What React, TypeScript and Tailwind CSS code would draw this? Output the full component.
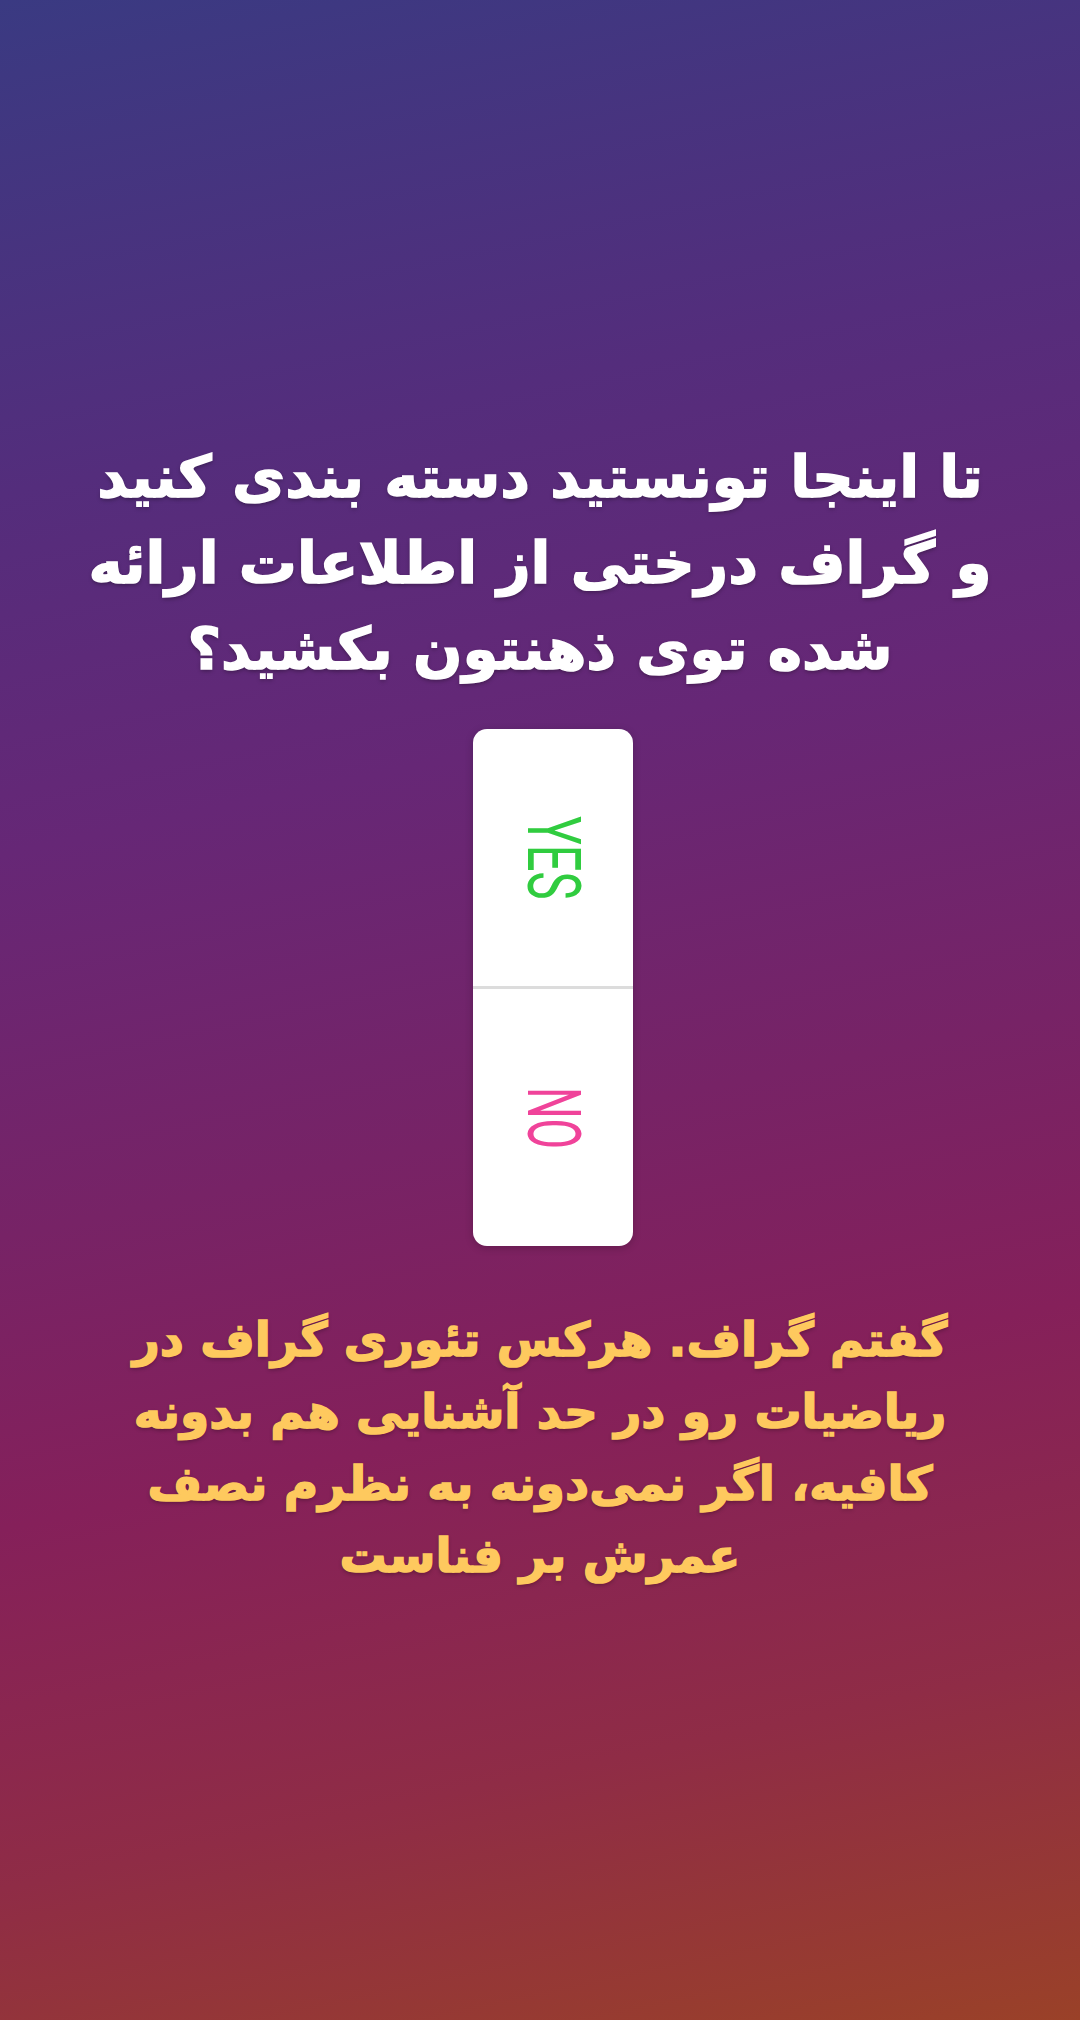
import React from "react";

const titleLines = [
  "تا اینجا تونستید دسته بندی کنید",
  "و گراف درختی از اطلاعات ارائه",
  "شده توی ذهنتون بکشید؟",
];

const answerLines = [
  "گفتم گراف. هرکس تئوری گراف در",
  "ریاضیات رو در حد آشنایی هم بدونه",
  "کافیه، اگر نمی‌دونه به نظرم نصف",
  "عمرش بر فناست",
];

const App = () => {
  return (
    <div className="w-[1080px] h-[2020px] overflow-hidden bg-[linear-gradient(168deg,#3a3a82_0%,#542d7c_22%,#662776_38%,#772366_55%,#85205a_68%,#8f2c46_84%,#9a4128_100%)] flex flex-col items-center pt-[434px]">
      {/* Question */}
      <div
        dir="rtl"
        className="flex flex-col items-center text-white font-bold text-[58px] leading-[86px] font-['DejaVu_Sans',sans-serif] [-webkit-text-stroke:1.5px_#fff] [text-shadow:0_2px_4px_rgba(0,0,0,0.35)]"
      >
        {titleLines.map((line) => (
          <div key={line} className="whitespace-nowrap">
            {line}
          </div>
        ))}
      </div>

      {/* Poll sticker */}
      <div className="mt-[37px] ml-[26px] w-[160px] h-[517px] bg-white rounded-[14px] flex flex-col overflow-hidden shadow-[0_2px_8px_rgba(0,0,0,0.2)]">
        <div className="flex-1 flex items-center justify-center">
          <span className="block rotate-90 scale-x-[0.64] text-[74px] leading-none text-[#30cc3f] font-['Roboto',sans-serif] font-normal">
            YES
          </span>
        </div>
        <div className="h-[3px] bg-[#dcdcdc]" />
        <div className="flex-1 flex items-center justify-center">
          <span className="block rotate-90 scale-x-[0.6] text-[74px] leading-none text-[#f0439a] font-['Roboto',sans-serif] font-normal">
            NO
          </span>
        </div>
      </div>

      {/* Answer */}
      <div
        dir="rtl"
        className="mt-[58px] flex flex-col items-center text-[#fec95e] font-bold text-[47px] leading-[72px] font-['DejaVu_Sans',sans-serif] [-webkit-text-stroke:1.5px_#fec95e] [text-shadow:0_2px_4px_rgba(0,0,0,0.3)]"
      >
        {answerLines.map((line) => (
          <div key={line} className="whitespace-nowrap">
            {line}
          </div>
        ))}
      </div>
    </div>
  );
};

export default App;
